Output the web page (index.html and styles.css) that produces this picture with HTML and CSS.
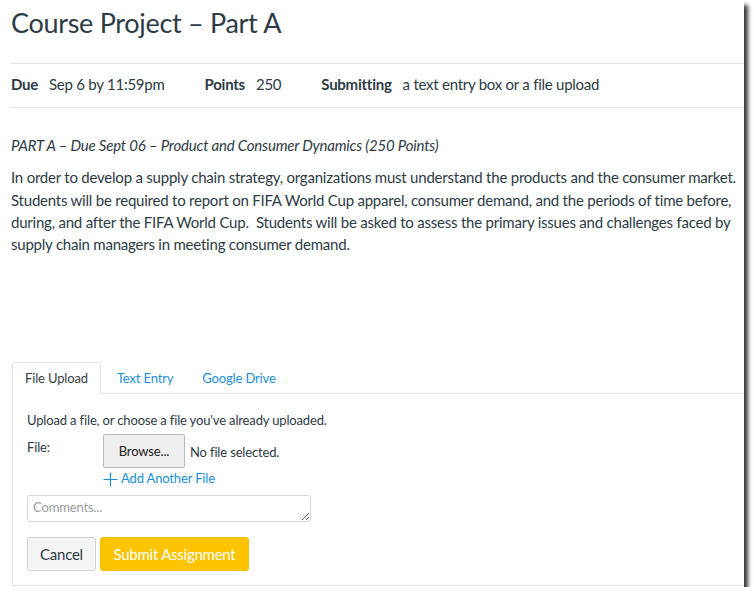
FILE: index.html
```html
<!DOCTYPE html>
<html lang="en">
<head>
<meta charset="utf-8">
<title>Course Project – Part A</title>
<link rel="stylesheet" href="styles.css">
</head>
<body>
<div class="frame">
  <div class="content">
    <h1 class="title">Course Project – Part A</h1>
    <div class="details">
      <div class="pair"><span class="label">Due</span><span class="value">Sep 6 by 11:59pm</span></div>
      <div class="pair"><span class="label">Points</span><span class="value">250</span></div>
      <div class="pair"><span class="label">Submitting</span><span class="value">a text entry box or a file upload</span></div>
    </div>
    <p class="subtitle">PART A – Due Sept 06 – Product and Consumer Dynamics (250 Points)</p>
    <p class="body-text">In order to develop a supply chain strategy, organizations must understand the products and the consumer market. Students will be required to report on FIFA World Cup apparel, consumer demand, and the periods of time before, during, and after the FIFA World Cup.&nbsp; Students will be asked to assess the primary issues and challenges faced by supply chain managers in meeting consumer demand.</p>

    <div class="submission">
      <div class="tabs">
        <div class="tab active">File Upload</div>
        <div class="tab">Text Entry</div>
        <div class="tab">Google Drive</div>
      </div>
      <div class="panel">
        <div class="hint">Upload a file, or choose a file you've already uploaded.</div>
        <div class="file-row">
          <div class="file-label">File:</div>
          <div class="file-field">
            <div class="file-input">
              <button class="browse" type="button">Browse...</button>
              <span class="no-file">No file selected.</span>
            </div>
            <div class="add-file">
              <svg class="plus" width="15" height="15" viewBox="0 0 15 15" aria-hidden="true">
                <path d="M7.5 0.5V14.5M0.5 7.5H14.5" stroke="#1a8fd6" stroke-width="1.2" fill="none"/>
              </svg>
              <span>Add Another File</span>
            </div>
          </div>
        </div>
        <textarea class="comments" placeholder="Comments..."></textarea>
        <div class="actions">
          <button class="btn btn-cancel" type="button">Cancel</button>
          <button class="btn btn-submit" type="button">Submit Assignment</button>
        </div>
      </div>
    </div>
  </div>
</div>
</body>
</html>
```
FILE: styles.css
```css
html, body {
  margin: 0;
  padding: 0;
  background: #ffffff;
}

body {
  font-family: Lato, "Open Sans", "Liberation Sans", sans-serif;
  color: #2d3b45;
}

.frame {
  width: 744px;
  height: 587px;
  background: #ffffff;
  box-shadow: 4px 5px 4px rgba(0, 0, 0, 0.78);
  overflow: hidden;
}

.content {
  padding-left: 11px;
}

.title {
  margin: 0;
  padding-top: 5px;
  font-size: 27px;
  line-height: 35px;
  font-weight: 400;
  letter-spacing: -0.3px;
  color: #2d3b45;
}

.details {
  margin-top: 23px;
  border-top: 1px solid #e3e5e7;
  border-bottom: 1px solid #e3e5e7;
  display: flex;
  gap: 40px;
  padding: 11px 0 13px;
  font-size: 15px;
  line-height: 19px;
  letter-spacing: -0.25px;
}

.pair {
  display: flex;
  gap: 11px;
}

.label {
  font-weight: 700;
}

.subtitle {
  margin: 26px 0 10px;
  font-size: 15px;
  line-height: 22.3px;
  font-style: italic;
  letter-spacing: -0.2px;
}

.body-text {
  margin: 0;
  font-size: 15px;
  line-height: 22.3px;
  letter-spacing: -0.22px;
}

.submission {
  margin-top: 107px;
  margin-left: 1px;
}

.tabs {
  display: flex;
  gap: 3px;
  border-bottom: 1px solid #e1e3e5;
}

.tab {
  padding: 0 12px;
  line-height: 30px;
  font-size: 13px;
  letter-spacing: -0.15px;
  color: #1a8fd6;
  border: 1px solid transparent;
  border-radius: 3px 3px 0 0;
  margin-bottom: -1px;
}

.tab.active {
  color: #3a3f44;
  border-color: #e1e3e5;
  border-bottom-color: #ffffff;
  background: #ffffff;
}

.panel {
  border-left: 1px solid #e1e3e5;
  border-bottom: 1px solid #e1e3e5;
  padding: 17px 14px 14px;
  font-size: 13px;
  line-height: 18px;
  letter-spacing: -0.15px;
  color: #2d3b45;
}

.file-row {
  display: flex;
  margin-top: 5px;
}

.file-label {
  width: 76px;
  padding-top: 4px;
}

.file-input {
  display: flex;
  align-items: center;
  gap: 5px;
}

.browse {
  width: 82px;
  height: 34px;
  font-family: inherit;
  font-size: 13px;
  letter-spacing: -0.15px;
  color: #222;
  background: #efefef;
  border: 1px solid #b9b9b9;
  border-radius: 2px;
  padding: 0;
}

.no-file {
  padding-top: 1px;
}

.add-file {
  display: flex;
  align-items: flex-start;
  gap: 3px;
  color: #1a8fd6;
  margin-top: 1px;
}

.plus {
  margin-top: 3px;
}

.comments {
  display: block;
  margin-top: 8px;
  width: 284px;
  height: 27px;
  box-sizing: border-box;
  border: 1px solid #d6d9dc;
  border-radius: 3px;
  padding: 3px 5px;
  font-family: inherit;
  font-size: 13px;
  line-height: 17px;
  letter-spacing: -0.15px;
  color: #2d3b45;
}

.comments::placeholder {
  color: #9a9ea2;
}

.actions {
  display: flex;
  gap: 4px;
  margin-top: 15px;
}

.btn {
  height: 34px;
  font-family: inherit;
  font-size: 15px;
  letter-spacing: -0.25px;
  border-radius: 3px;
  padding: 0;
  white-space: nowrap;
}

.btn-cancel {
  width: 69px;
  background: #f5f5f5;
  border: 1px solid #cfd3d6;
  color: #2d3b45;
}

.btn-submit {
  width: 149px;
  background: #fcc400;
  border: 1px solid #f5bf00;
  color: #ffffff;
}
```
